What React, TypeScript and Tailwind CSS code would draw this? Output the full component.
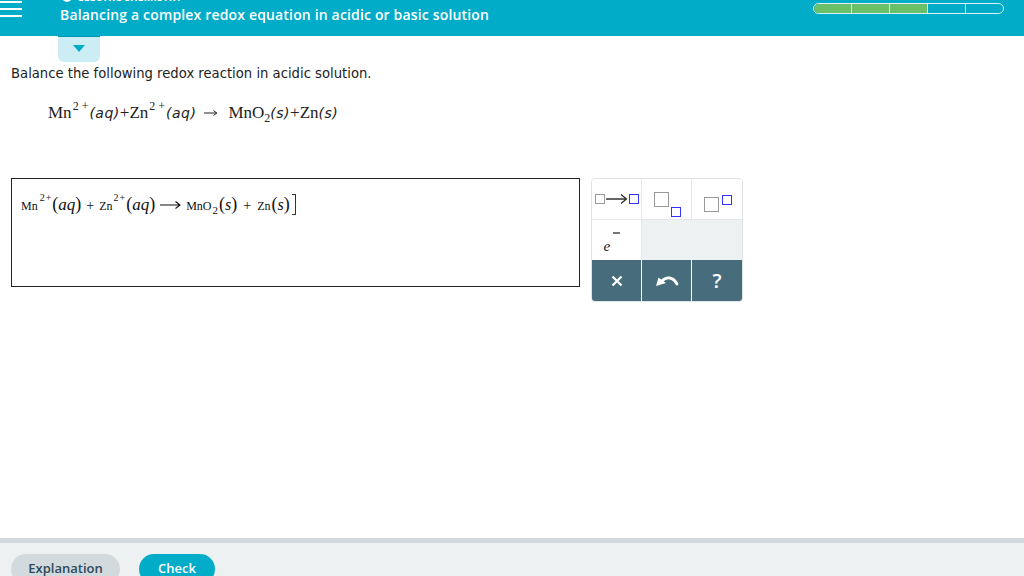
import React from "react";

function Sq({ color, size = 10 }: { color: string; size?: number }) {
  return (
    <span
      className="inline-block border-[1.5px] box-border"
      style={{ width: size, height: size, borderColor: color }}
    />
  );
}

export default function App() {
  const serif = { fontFamily: '"Liberation Serif", "Times New Roman", serif' };
  const dj = { fontFamily: '"DejaVu Sans", Verdana, sans-serif' };
  return (
    <div
      className="w-[1024px] h-[576px] overflow-hidden bg-white flex flex-col relative"
      style={{ fontFamily: '"Open Sans", "Liberation Sans", sans-serif' }}
    >
      {/* Header */}
      <div className="h-[36px] bg-[#00acc8] flex shrink-0 relative">
        <div className="w-[22px] pt-[1px] flex flex-col gap-[5px]">
          <span className="block h-[2px] w-[22px] bg-white" />
          <span className="block h-[2px] w-[22px] bg-white" />
          <span className="block h-[2px] w-[22px] bg-white" />
        </div>
        <div className="ml-[38px] flex flex-col">
          <div className="h-[6px] overflow-hidden relative">
            <div className="flex items-center gap-[6px] absolute top-[-8px] left-[2px]">
              <span className="w-[10px] h-[10px] rounded-full border-2 border-white" />
              <span className="text-[10px] font-bold text-white tracking-wide leading-[10px]">ELECTROCHEMISTRY</span>
            </div>
          </div>
          <div className="text-white text-[14px] font-semibold leading-[18px] tracking-[0.16px]">
            Balancing a complex redox equation in acidic or basic solution
          </div>
        </div>
        <div className="ml-auto mr-[20px] mt-[3px] flex h-[11px] w-[191px] rounded-full overflow-hidden border border-[#d9f3f7]">
          <span className="flex-1 bg-[#6abf69] border-r border-[#d9f3f7]" />
          <span className="flex-1 bg-[#6abf69] border-r border-[#d9f3f7]" />
          <span className="flex-1 bg-[#6abf69] border-r border-[#d9f3f7]" />
          <span className="flex-1 border-r border-[#d9f3f7]" />
          <span className="flex-1" />
        </div>
      </div>

      {/* Main */}
      <div className="flex-1 flex flex-col">
        <div className="ml-[58px] w-[42px] h-[26px] bg-[#ccedf3] rounded-b-[6px] border-t border-[#0095ad] flex items-start justify-center pt-[8px]">
          <svg width="12" height="7" viewBox="0 0 12 7">
            <path d="M0 0 H12 L6 7 Z" fill="#00acc8" />
          </svg>
        </div>

        <div className="ml-[11px] mt-[3px] text-[#222] leading-[18px]" style={{ ...dj, fontSize: 13.2 }}>
          Balance the following redox reaction in acidic solution.
        </div>

        <div className="ml-[48px] mt-[17px] flex items-baseline text-[#222] h-[26px]">
          <span className="text-[17px]" style={serif}>Mn</span>
          <sup className="text-[12px] relative top-[-8px] ml-[1px] mr-[-2px] tracking-[3px]" style={serif}>2+</sup>
          <span className="italic text-[14px] tracking-[0.5px]" style={dj}>(aq)</span>
          <span className="text-[17px]" style={serif}>+Zn</span>
          <sup className="text-[12px] relative top-[-8px] ml-[1px] mr-[-2px] tracking-[3px]" style={serif}>2+</sup>
          <span className="italic text-[14px] tracking-[0.5px]" style={dj}>(aq)</span>
          <span className="ml-[8px] mr-[10px] self-center">
            <svg width="14" height="8" viewBox="0 0 14 8">
              <path d="M0 4 H12.5 M9.5 1.5 L12.8 4 L9.5 6.5" stroke="#222" strokeWidth="1" fill="none" />
            </svg>
          </span>
          <span className="text-[17px]" style={serif}>MnO</span>
          <sub className="text-[12px] relative top-[4px]" style={serif}>2</sub>
          <span className="italic text-[14px] tracking-[0.5px]" style={dj}>(s)</span>
          <span className="text-[17px]" style={serif}>+Zn</span>
          <span className="italic text-[14px] tracking-[0.5px]" style={dj}>(s)</span>
        </div>

        <div className="mt-[52px] ml-[11px] flex gap-[11px]">
          <div className="w-[569px] h-[109px] border border-[#222] pl-[9px] pt-[12px]">
            <div className="flex items-baseline text-[#111]" style={serif}>
              <span className="text-[12px]">Mn</span>
              <sup className="text-[10px] relative top-[-9px] ml-[2px] tracking-[1px]">2+</sup>
              <span className="text-[18px]">(</span>
              <span className="text-[17px] italic">aq</span>
              <span className="text-[18px]">)</span>
              <span className="text-[14px] mx-[5px]">+</span>
              <span className="text-[12px]">Zn</span>
              <sup className="text-[10px] relative top-[-9px] ml-[1px] tracking-[1px]">2+</sup>
              <span className="text-[18px]">(</span>
              <span className="text-[17px] italic">aq</span>
              <span className="text-[18px]">)</span>
              <span className="mx-[5px] self-center">
                <svg width="21" height="10" viewBox="0 0 21 10">
                  <path d="M0 5 H19.5 M15.5 1.5 L20 5 L15.5 8.5" stroke="#111" strokeWidth="1.1" fill="none" />
                </svg>
              </span>
              <span className="text-[12px]">MnO</span>
              <sub className="text-[11px] relative top-[4px] ml-[1px]">2</sub>
              <span className="text-[18px] ml-[1px]">(</span>
              <span className="text-[16px] italic">s</span>
              <span className="text-[18px]">)</span>
              <span className="text-[14px] mx-[6px]">+</span>
              <span className="text-[12px] mr-[1px]">Zn</span>
              <span className="text-[18px]">(</span>
              <span className="text-[16px] italic">s</span>
              <span className="text-[18px]">)</span>
              <span className="inline-block w-[4px] h-[21px] border-r border-t border-b border-[#333] ml-[2px] self-center" />
            </div>
          </div>

          <div className="w-[152px] h-[124px] rounded-[4px] overflow-hidden border border-[#dfe3e5] grid grid-cols-3 grid-rows-3">
            <div className="bg-white border-r border-b border-[#e3e7e9] flex items-center justify-center">
              <Sq color="#999" size={10} />
              <svg width="22" height="12" viewBox="0 0 22 12" className="mx-[1px]">
                <path d="M0 6 H20 M15 1.5 L20.5 6 L15 10.5" stroke="#333" strokeWidth="1.3" fill="none" />
              </svg>
              <Sq color="#3333ff" size={10} />
            </div>
            <div className="bg-white border-r border-b border-[#e3e7e9] flex items-center justify-center">
              <div className="relative w-[30px] h-[24px]">
                <span className="absolute left-[2px] top-[2px]"><Sq color="#999" size={15} /></span>
                <span className="absolute left-[19px] top-[12px]"><Sq color="#3333ff" size={10} /></span>
              </div>
            </div>
            <div className="bg-white border-b border-[#e3e7e9] flex items-center justify-center">
              <div className="relative w-[30px] h-[24px]">
                <span className="absolute left-[2px] top-[7px]"><Sq color="#999" size={15} /></span>
                <span className="absolute left-[20px] top-[0px]"><Sq color="#3333ff" size={10} /></span>
              </div>
            </div>
            <div className="bg-white border-r border-[#e3e7e9] flex items-center justify-center">
              <div className="relative w-[22px] h-[24px] -ml-[12px]">
                <span className="absolute left-[4px] top-[7px] italic text-[15px] text-[#111]" style={serif}>e</span>
                <span className="absolute left-[13px] top-[4px] w-[7px] h-[2px] bg-[#777]" />
              </div>
            </div>
            <div className="col-span-2 bg-[#eef1f2]" />
            <div className="bg-[#476c7b] border-r border-white flex items-center justify-center">
              <svg width="12" height="12" viewBox="0 0 12 12">
                <path d="M1.5 1.5 L10.5 10.5 M10.5 1.5 L1.5 10.5" stroke="white" strokeWidth="2.2" />
              </svg>
            </div>
            <div className="bg-[#476c7b] border-r border-white flex items-center justify-center">
              <svg width="24" height="14" viewBox="0 0 24 14">
                <path d="M7 7 C11 2.5 18 2.5 22 10" stroke="white" strokeWidth="2.8" fill="none" strokeLinecap="round" />
                <path d="M1 12 L3.5 3.5 L11 9 Z" fill="white" />
              </svg>
            </div>
            <div className="bg-[#476c7b] flex items-center justify-center">
              <span className="text-white text-[20px] font-semibold leading-none">?</span>
            </div>
          </div>
        </div>
      </div>

      {/* Footer */}
      <div className="h-[38px] shrink-0 bg-[#edf1f2] border-t-[5px] border-[#d3dadd] pl-[11px] pt-[11px] flex gap-[19px]">
        <button className="w-[109px] h-[30px] rounded-full bg-[#d3dadd] text-[#2c4a5a] text-[13px] font-semibold">
          Explanation
        </button>
        <button className="w-[76px] h-[30px] rounded-full bg-[#00acc8] text-white text-[13px] font-semibold">
          Check
        </button>
      </div>
    </div>
  );
}
